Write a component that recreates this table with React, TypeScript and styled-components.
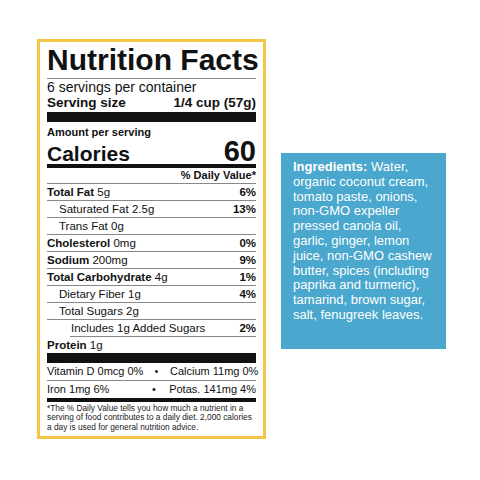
import React from 'react';
import styled, { createGlobalStyle } from 'styled-components';

const GlobalStyle = createGlobalStyle`
    html, body {
        margin: 0;
        padding: 0;
        background: #fff;
    }
`;

const Page = styled.div`
    width: 480px;
    height: 480px;
    box-sizing: border-box;
    padding: 39px 0 0 37px;
    display: flex;
    align-items: flex-start;
    gap: 15px;
    background: #fff;
`;

const Label = styled.div`
    width: 229px;
    height: 400px;
    box-sizing: border-box;
    border: 3px solid #f5c546;
    padding: 3px 7px 0 7px;
    font-family: "Liberation Sans", Arial, sans-serif;
    color: #111;
    background: #fff;
`;

const Title = styled.div`
    font-size: 30px;
    font-weight: bold;
    line-height: 30px;
    padding-bottom: 3px;
    border-bottom: 1px solid #888;
    white-space: nowrap;
`;

const Servings = styled.div`
    font-size: 14px;
    line-height: 15px;
    padding-top: 1px;
`;

const ServingSize = styled.div`
    display: flex;
    justify-content: space-between;
    font-size: 13.5px;
    font-weight: bold;
    line-height: 15px;
`;

const Bar = styled.div<{ h: number; top?: number }>`
    height: ${p => p.h}px;
    margin-top: ${p => p.top || 0}px;
    background: #111;
`;

const Amount = styled.div`
    font-size: 11px;
    font-weight: bold;
    line-height: 12px;
    margin-top: 4px;
`;

const CaloriesRow = styled.div`
    display: flex;
    justify-content: space-between;
    align-items: baseline;
    font-weight: bold;
    height: 26px;
    line-height: 26px;
    border-bottom: 4px solid #111;
`;

const CalLabel = styled.span`
    font-size: 21px;
`;

const CalValue = styled.span`
    font-size: 29px;
`;

const DailyHead = styled.div`
    text-align: right;
    font-size: 11px;
    font-weight: bold;
    line-height: 15px;
    border-bottom: 1px solid #888;
`;

const Row = styled.div<{ indent?: number; lineIndent?: number; noLine?: boolean }>`
    display: flex;
    justify-content: space-between;
    font-size: 11.5px;
    line-height: 16px;
    padding-left: ${p => p.indent || 0}px;
    margin-left: ${p => p.lineIndent || 0}px;
    border-bottom: ${p => (p.noLine ? 'none' : '1px solid #888')};
`;

const Name = styled.span`
    font-weight: bold;
`;

const Pct = styled.span`
    font-weight: bold;
`;

const MinRow = styled.div<{ thick?: boolean }>`
    display: grid;
    grid-template-columns: 1fr 26px 89px;
    font-size: 11px;
    line-height: 17px;
    border-bottom: ${p => (p.thick ? '4px solid #111' : '1px solid #888')};
    white-space: nowrap;
`;

const Dot = styled.span`
    text-align: center;
`;

const Right = styled.span`
    text-align: right;
`;

const Foot = styled.div`
    font-size: 8.3px;
    line-height: 9.4px;
    padding-top: 2px;
    color: #222;
`;

const Ingredients = styled.div`
    width: 165px;
    height: 196px;
    box-sizing: border-box;
    margin-top: 114px;
    padding: 7px 4px 0 12px;
    background: #4aa7cd;
    color: #fff;
    font-family: "Liberation Sans", Arial, sans-serif;
    font-size: 13px;
    line-height: 14.8px;
    white-space: nowrap;
`;

const Line = styled.div``;

const Strong = styled.span`
    font-weight: bold;
`;

type Nutrient = {
    name: string;
    amount: string;
    pct?: string;
    bold?: boolean;
    indent?: number;
};

const nutrients: Nutrient[] = [
    { name: 'Total Fat', amount: '5g', pct: '6%', bold: true },
    { name: 'Saturated Fat', amount: '2.5g', pct: '13%', indent: 12 },
    { name: 'Trans Fat', amount: '0g', indent: 12 },
    { name: 'Cholesterol', amount: '0mg', pct: '0%', bold: true },
    { name: 'Sodium', amount: '200mg', pct: '9%', bold: true },
    { name: 'Total Carbohydrate', amount: '4g', pct: '1%', bold: true },
    { name: 'Dietary Fiber', amount: '1g', pct: '4%', indent: 12 },
];

const ingredientLines = [
    'organic coconut cream,',
    'tomato paste, onions,',
    'non-GMO expeller',
    'pressed canola oil,',
    'garlic, ginger, lemon',
    'juice, non-GMO cashew',
    'butter, spices (including',
    'paprika and turmeric),',
    'tamarind, brown sugar,',
    'salt, fenugreek leaves.',
];

const App: React.FC = () => {
    return (
        <Page>
            <GlobalStyle />
            <Label>
                <Title>Nutrition Facts</Title>
                <Servings>6 servings per container</Servings>
                <ServingSize>
                    <span>Serving size</span>
                    <span>1/4 cup (57g)</span>
                </ServingSize>
                <Bar h={10} top={2} />
                <Amount>Amount per serving</Amount>
                <CaloriesRow>
                    <CalLabel>Calories</CalLabel>
                    <CalValue>60</CalValue>
                </CaloriesRow>
                <DailyHead>% Daily Value*</DailyHead>
                {nutrients.map(n => (
                    <Row key={n.name} indent={n.indent}>
                        <span>
                            {n.bold ? <Name>{n.name}</Name> : n.name} {n.amount}
                        </span>
                        <Pct>{n.pct}</Pct>
                    </Row>
                ))}
                <Row indent={12}>
                    <span>Total Sugars 2g</span>
                </Row>
                <Row lineIndent={23} indent={1}>
                    <span>Includes 1g Added Sugars</span>
                    <Pct>2%</Pct>
                </Row>
                <Row noLine>
                    <span><Name>Protein</Name> 1g</span>
                </Row>
                <Bar h={10} />
                <MinRow>
                    <span>Vitamin D 0mcg 0%</span>
                    <Dot>•</Dot>
                    <Right>Calcium 11mg 0%</Right>
                </MinRow>
                <MinRow thick>
                    <span>Iron 1mg 6%</span>
                    <Dot>•</Dot>
                    <Right>Potas. 141mg 4%</Right>
                </MinRow>
                <Foot>
                    *The % Daily Value tells you how much a nutrient in a serving of food
                    contributes to a daily diet. 2,000 calories a day is used for general
                    nutrition advice.
                </Foot>
            </Label>
            <Ingredients>
                <Line><Strong>Ingredients:</Strong> Water,</Line>
                {ingredientLines.map(l => (
                    <Line key={l}>{l}</Line>
                ))}
            </Ingredients>
        </Page>
    );
};

export default App;
